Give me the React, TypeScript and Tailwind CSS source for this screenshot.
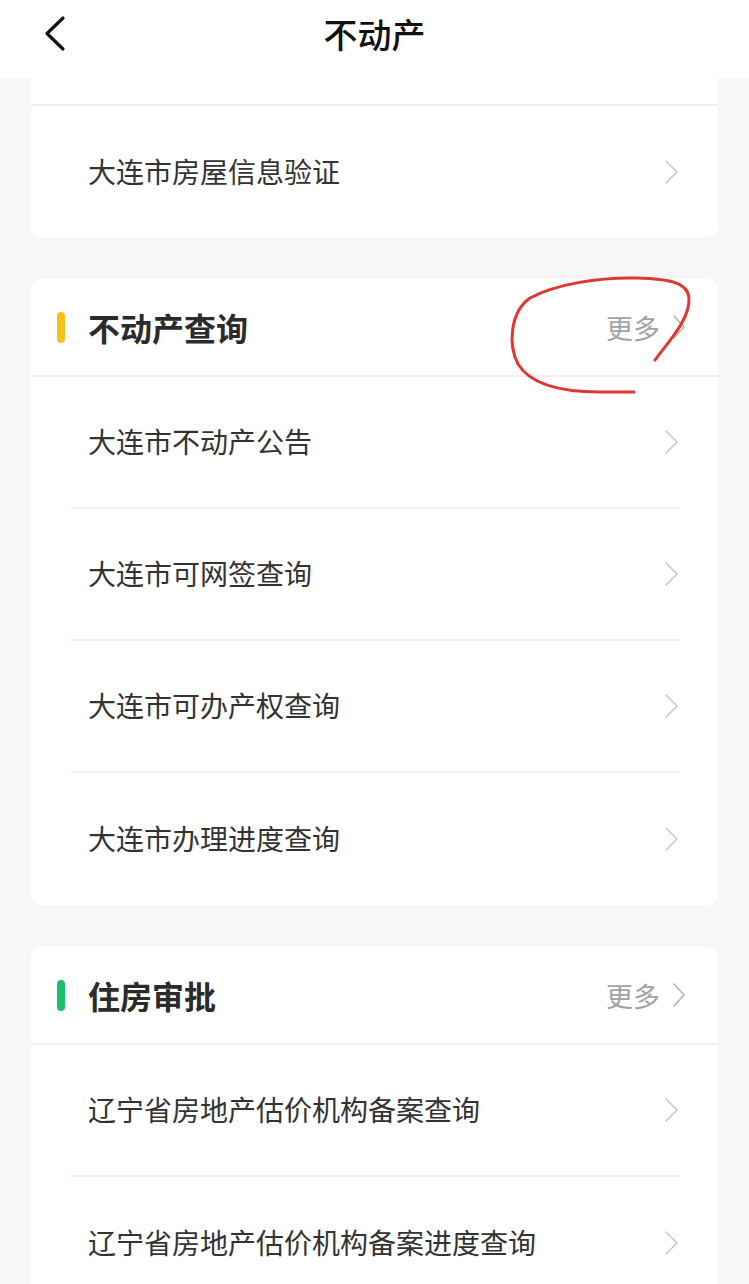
import React from "react";

const font = { fontFamily: '"Noto Sans CJK SC", "Noto Sans", sans-serif' };

function Chevron() {
    return (
        <svg width="16" height="26" viewBox="0 0 16 26" fill="none">
            <path d="M2 2 L13 13 L2 24" stroke="#c9c9c9" strokeWidth="1.6" strokeLinecap="round" strokeLinejoin="round" />
        </svg>
    );
}

function Row({ label, last }: { label: string; last?: boolean }) {
    return (
        <div>
            <div className={`flex items-center justify-between pl-[57px] pr-[38px] ${last ? "h-[132px]" : "h-[130px]"}`}>
                <span className="text-[28px] leading-none text-[#333333] -mt-[2px]">{label}</span>
                <Chevron />
            </div>
            {!last && <div className="h-[2px] bg-[#efefef] ml-[40px] mr-[39px]" />}
        </div>
    );
}

function Section({ title, color, items }: { title: string; color: string; items: string[] }) {
    return (
        <div className="bg-white rounded-[10px]">
            <div className="flex items-center justify-between h-[96px] pl-[26px] pr-[32px]">
                <div className="flex items-center gap-[23px]">
                    <div className={`w-[8px] h-[31px] rounded-full ${color}`} />
                    <span className="text-[32px] leading-none font-bold text-[#2b2b2b]">{title}</span>
                </div>
                <div className="flex items-center gap-[12px]">
                    <span className="text-[27px] leading-none text-[#a3a3a3]">更多</span>
                    <svg width="14" height="26" viewBox="0 0 14 26" fill="none">
                        <path d="M2 2 L12 13 L2 24" stroke="#b5b5b5" strokeWidth="1.6" strokeLinecap="round" strokeLinejoin="round" />
                    </svg>
                </div>
            </div>
            <div className="h-[2px] bg-[#efefef]" />
            {items.map((it, i) => (
                <Row key={it} label={it} last={i === items.length - 1} />
            ))}
        </div>
    );
}

export default function App() {
    return (
        <div className="relative w-[749px] min-h-[1284px] bg-[#f7f7f7] overflow-hidden" style={font}>
            {/* top bar */}
            <div className="relative flex items-center justify-center h-[78px] bg-white">
                <svg className="absolute left-[42px] top-[15px]" width="26" height="38" viewBox="0 0 26 38" fill="none">
                    <path d="M21 3 L5 18.5 L21 34" stroke="#111111" strokeWidth="3.2" strokeLinecap="round" strokeLinejoin="round" />
                </svg>
                <span className="text-[34px] leading-none font-medium text-[#111111] -mt-[10px]">不动产</span>
            </div>

            <div className="px-[31px] flex flex-col gap-[42px] pb-[40px]">
                <div className="bg-white rounded-b-[10px]">
                    <div className="h-[26px]" />
                    <div className="h-[2px] bg-[#efefef]" />
                    <div className="flex items-center justify-between h-[131px] pl-[57px] pr-[38px]">
                        <span className="text-[28px] leading-none text-[#333333] -mt-[2px]">大连市房屋信息验证</span>
                        <Chevron />
                    </div>
                </div>

                <Section
                    title="不动产查询"
                    color="bg-[#f5c214]"
                    items={["大连市不动产公告", "大连市可网签查询", "大连市可办产权查询", "大连市办理进度查询"]}
                />

                <Section
                    title="住房审批"
                    color="bg-[#1fbf6b]"
                    items={["辽宁省房地产估价机构备案查询", "辽宁省房地产估价机构备案进度查询"]}
                />
            </div>

            {/* hand drawn red mark */}
            <svg className="absolute left-0 top-0 pointer-events-none" width="749" height="1284" viewBox="0 0 749 1284" fill="none">
                <path
                    d="M655 360 C668 342 690 320 689 298 C688 282 668 279 637 278 C600 277 556 284 530 298 C510 312 508 345 518 364 C530 384 560 392 600 392 L634 392"
                    stroke="#e0372f"
                    strokeWidth="3"
                    strokeLinecap="round"
                    strokeLinejoin="round"
                />
            </svg>
        </div>
    );
}
